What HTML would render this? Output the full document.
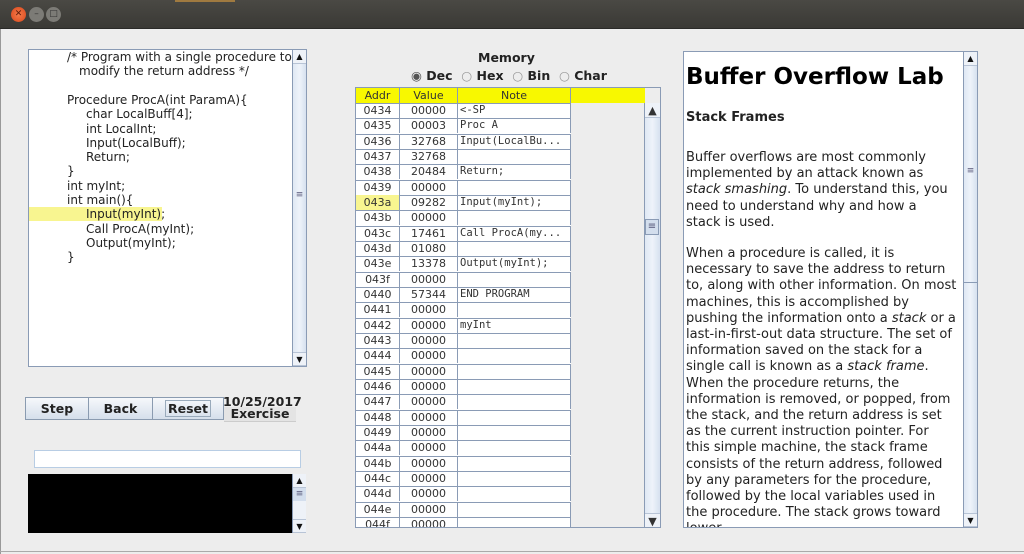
<!DOCTYPE html>
<html><head><meta charset="utf-8"><style>
*{margin:0;padding:0;box-sizing:border-box}
body{width:1024px;height:554px;overflow:hidden;background:#ededed;font-family:"DejaVu Sans","Liberation Sans",sans-serif;position:relative}
.a{position:absolute}
.tb{left:0;top:0;width:1024px;height:29px;background:linear-gradient(#4a4944,#3a3935);border-bottom:1px solid #2a2a28}
.cb{width:15px;height:15px;border-radius:50%;top:7px;font-size:9px;color:#333;text-align:center;line-height:15px}
.sb{background:linear-gradient(90deg,#dfe8f4,#eef3fa,#d6e1ef);border-left:1px solid #8a9bb5}
.arr{width:100%;height:14px;font-size:8px;text-align:center;line-height:14px;color:#111;background:#eef2f8;border-bottom:1px solid #b8c4d6}
.cl{position:absolute;font-size:12px;line-height:14.3px;color:#222;white-space:pre}
.btn{top:397px;height:23px;border:1px solid #8a9bb0;background:linear-gradient(#f6f8fb,#d5dfeb);font-weight:bold;font-size:12.5px;text-align:center;line-height:21px;color:#222}
.mem div{position:absolute;font-size:11px;color:#333;height:15px;line-height:15px}
.rt{left:684px;top:52px;width:279px;height:475px;background:#fff;overflow:hidden;color:#222}
.p{position:absolute;left:2px;font-size:13px;line-height:16.2px;white-space:pre}
</style></head><body>
<div class="a tb"></div>
<div class="a" style="left:175px;top:0;width:60px;height:2px;background:#a07a40"></div>
<div class="a cb" style="left:11px;background:radial-gradient(#f47a4a,#d9481c);color:#5a1a0a">✕</div>
<div class="a cb" style="left:29px;background:#7c7b76;top:7px">–</div>
<div class="a cb" style="left:46px;background:#7c7b76">□</div>
<div class="a" style="left:0;top:29px;width:1px;height:525px;background:#999"></div>
<div class="a" style="left:0;top:551px;width:1024px;height:1px;background:#aaa"></div>

<div class="a" style="left:28px;top:49px;width:279px;height:318px;border:1px solid #8a9bb5;background:#fff"></div>
<div class="a" style="left:29px;top:207px;width:133px;height:14px;background:#f8f590"></div>
<div class="cl" style="left:67px;top:50px">/* Program with a single procedure to</div>
<div class="cl" style="left:79px;top:64.3px">modify the return address */</div>
<div class="cl" style="left:67px;top:92.9px">Procedure ProcA(int ParamA){</div>
<div class="cl" style="left:86px;top:107.2px">char LocalBuff[4];</div>
<div class="cl" style="left:86px;top:121.5px">int LocalInt;</div>
<div class="cl" style="left:86px;top:135.8px">Input(LocalBuff);</div>
<div class="cl" style="left:86px;top:150.1px">Return;</div>
<div class="cl" style="left:67px;top:164.4px">}</div>
<div class="cl" style="left:67px;top:178.7px">int myInt;</div>
<div class="cl" style="left:67px;top:193px">int main(){</div>
<div class="cl" style="left:86px;top:207.3px">Input(myInt);</div>
<div class="cl" style="left:86px;top:221.6px">Call ProcA(myInt);</div>
<div class="cl" style="left:86px;top:235.9px">Output(myInt);</div>
<div class="cl" style="left:67px;top:250.2px">}</div>
<div class="a sb" style="left:292px;top:50px;width:14px;height:316px">
<div class="arr">▲</div><div class="a" style="left:0;top:140px;width:13px;font-size:9px;text-align:center;color:#557">≡</div>
<div class="arr a" style="top:302px;border-top:1px solid #b8c4d6">▼</div></div>

<div class="a btn" style="left:25px;width:64px">Step</div>
<div class="a btn" style="left:88px;width:65px">Back</div>
<div class="a btn" style="left:152px;width:72px"><span style="border:1px solid #9ab;padding:0 2px">Reset</span></div>
<div class="a" style="left:223px;top:394px;font-size:12.5px;font-weight:bold;color:#222">10/25/2017</div>
<div class="a" style="left:224px;top:407px;width:72px;height:15px;background:#e4e4e4;border-bottom:1px solid #ccc;font-size:12.5px;font-weight:bold;text-align:center;line-height:14px;color:#222">Exercise</div>
<div class="a" style="left:34px;top:450px;width:267px;height:18px;background:#fff;border:1px solid #b8cde4"></div>
<div class="a" style="left:28px;top:474px;width:264px;height:59px;background:#000"></div>
<div class="a sb" style="left:292px;top:474px;width:14px;height:59px;background:#eef2f8">
<div class="arr">▲</div><div class="a" style="left:0;top:14px;width:13px;height:13px;background:#d3deed;font-size:9px;text-align:center;color:#557;line-height:13px">≡</div>
<div class="arr a" style="top:45px;border-top:1px solid #b8c4d6">▼</div></div>

<div class="a" style="left:478px;top:50px;font-size:12.5px;font-weight:bold;color:#222">Memory</div>
<div class="a" style="left:411px;top:68px;font-size:12.5px;font-weight:bold;color:#222;white-space:pre"><span style="color:#555">◉</span> Dec  <span style="color:#999">○</span> Hex  <span style="color:#999">○</span> Bin  <span style="color:#999">○</span> Char</div>

<div class="a mem" style="left:355px;top:87px;width:306px;height:441px;border:1px solid #8a9bb5;background:#ededed;overflow:hidden">
<div style="left:0;top:0;width:289px;height:15px;background:#f8f800"></div>
<div style="left:0;top:0;width:43px;text-align:center;color:#333">Addr</div>
<div style="left:43px;top:0;width:58px;text-align:center;border-left:1px solid #8a9bb5">Value</div>
<div style="left:101px;top:0;width:114px;text-align:center;border-left:1px solid #8a9bb5;border-right:1px solid #8a9bb5">Note</div>
<div id="rows"></div>
<div class="sb" style="left:288px;top:15px;width:16px;height:425px">
<div class="arr">▲</div><div style="left:0;top:116px;width:14px;height:16px;background:#d3deed;border:1px solid #8a9bb5;font-size:10px;text-align:center;color:#557;line-height:14px">≡</div>
<div class="arr" style="position:absolute;top:410px;border-top:1px solid #b8c4d6">▼</div></div>
</div>

<div class="a" style="left:683px;top:51px;width:295px;height:477px;border:1px solid #8a9bb5;background:#fff"></div>
<div class="a rt">
<div class="a" style="left:2px;top:12px;font-size:23px;font-weight:bold;color:#000">Buffer Overflow Lab</div>
<div class="a" style="left:2px;top:58px;font-size:13px;font-weight:bold;color:#222">Stack Frames</div>
<div class="p" style="top:98px">Buffer overflows are most commonly
implemented by an attack known as
<i>stack smashing</i>. To understand this, you
need to understand why and how a
stack is used.</div>
<div class="p" style="top:194px">When a procedure is called, it is
necessary to save the address to return
to, along with other information. On most
machines, this is accomplished by
pushing the information onto a <i>stack</i> or a
last-in-first-out data structure. The set of
information saved on the stack for a
single call is known as a <i>stack frame</i>.
When the procedure returns, the
information is removed, or popped, from
the stack, and the return address is set
as the current instruction pointer. For
this simple machine, the stack frame
consists of the return address, followed
by any parameters for the procedure,
followed by the local variables used in
the procedure. The stack grows toward
lower</div>
</div>
<div class="a sb" style="left:963px;top:52px;width:14px;height:475px">
<div class="arr">▲</div><div class="a" style="left:0;top:114px;width:13px;font-size:9px;text-align:center;color:#557">≡</div>
<div class="a" style="left:0;top:230px;width:13px;height:1px;background:#8a9bb5"></div>
<div class="arr a" style="top:461px;border-top:1px solid #b8c4d6">▼</div></div>

<script>
var notes={0:"&lt;-SP",1:"Proc A",2:"Input(LocalBu...",4:"Return;",6:"Input(myInt);",8:"Call ProcA(my...",10:"Output(myInt);",12:"END PROGRAM",14:"myInt"};
var vals=["00000","00003","32768","32768","20484","00000","09282","00000","17461","01080","13378","00000","57344","00000","00000"];
var h="";
for(var i=0;i<28;i++){var t=15+i*15.33;var a=(0x434+i).toString(16).padStart(4,"0");
var v=vals[i]||"00000";var n=notes[i]||"";
h+='<div style="left:0;top:'+t+'px;width:215px;height:15.4px;background:#fff;border-top:1px solid #8a9bb5"></div>';
h+='<div style="left:0;top:'+t+'px;width:43px;text-align:center;'+(i==6?'background:#f8f590;':'')+'">'+a+'</div>';
h+='<div style="left:43px;top:'+t+'px;width:58px;text-align:center;border-left:1px solid #8a9bb5">'+v+'</div>';
h+='<div style="left:101px;top:'+t+'px;width:114px;padding-left:2px;font-family:\'DejaVu Sans Mono\',monospace;font-size:10.5px;border-left:1px solid #8a9bb5;border-right:1px solid #8a9bb5">'+n+'</div>';}
document.getElementById("rows").outerHTML=h;
</script>
</body></html>
